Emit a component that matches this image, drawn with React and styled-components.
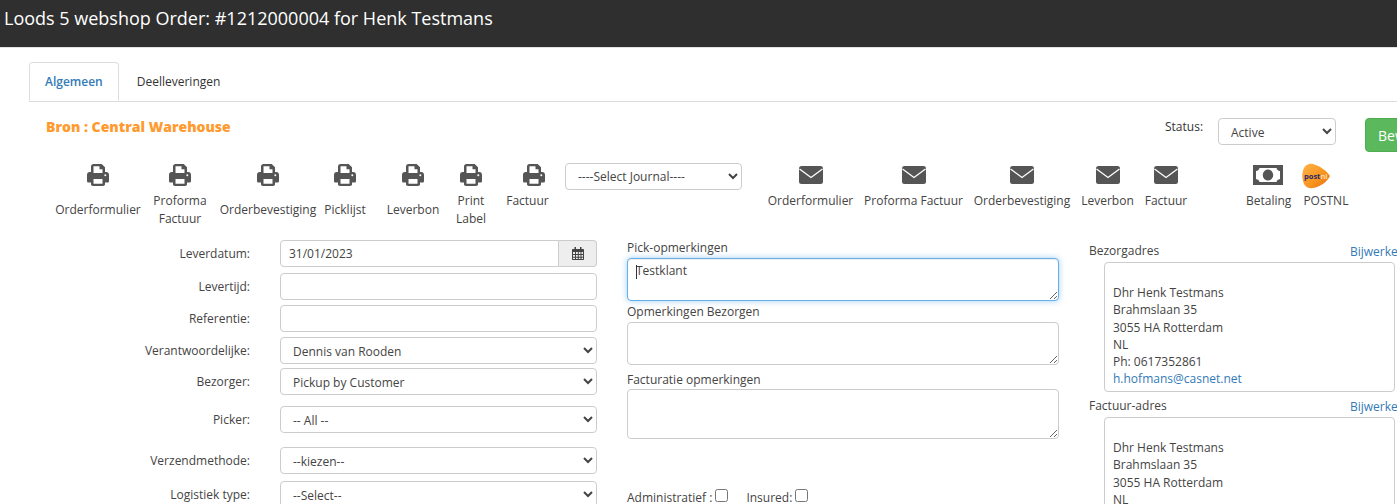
import React from 'react';
import styled, { createGlobalStyle } from 'styled-components';

const printLeft = [
  { lines: ['Orderformulier'], center: 84, iconShift: 0 },
  { lines: ['Proforma', 'Factuur'], center: 80, iconShift: 0 },
  { lines: ['Orderbevestiging'], center: 96, iconShift: 0 },
  { lines: ['Picklijst'], center: 58, iconShift: 0 },
  { lines: ['Leverbon'], center: 78, iconShift: 0 },
  { lines: ['Print', 'Label'], center: 38, iconShift: 0 },
  { lines: ['Factuur'], center: 75, iconShift: 6, top: true },
];

const mails = [
  { label: 'Orderformulier', width: 85 },
  { label: 'Proforma Factuur', width: 99 },
  { label: 'Orderbevestiging', width: 96 },
  { label: 'Leverbon', width: 53 },
  { label: 'Factuur', width: 42 },
];

const GlobalStyle = createGlobalStyle`
  html, body {
    margin: 0;
    padding: 0;
    height: 504px;
    overflow: hidden;
    background: #fff;
  }
  body {
    font-family: "Open Sans", "Noto Sans", sans-serif;
    font-size: 12px;
    color: #333;
  }
`;

const Page = styled.div`
  width: 1397px;
  height: 504px;
  overflow: hidden;
`;

const Header = styled.header`
  height: 48px;
  background: #2f2f2f;
  border-bottom: 1px solid #e3e3e3;
  padding: 5px 0 0 4px;
  box-sizing: border-box;
  color: #fff;
  font-size: 18px;
  line-height: 26px;
`;

const Content = styled.main`
  padding: 14px 0 0 29px;
  width: 1500px;
`;

const Tabs = styled.nav`
  display: flex;
  height: 39px;
  width: 1368px;
  border-bottom: 1px solid #ddd;
  box-sizing: content-box;
`;

const Tab = styled.div`
  height: ${p => (p.$active ? '39px' : '38px')};
  padding: 0 15px;
  line-height: 38px;
  font-size: 12px;
  box-sizing: border-box;
  color: ${p => (p.$active ? '#337ab7' : '#333')};
  font-weight: ${p => (p.$active ? 600 : 400)};
  background: #fff;
  border: 1px solid ${p => (p.$active ? '#ddd' : 'transparent')};
  border-bottom: ${p => (p.$active ? '1px solid #fff' : 'none')};
  border-radius: 4px 4px 0 0;
  margin-right: 2px;
`;

const SourceRow = styled.div`
  display: flex;
  height: 61px;
  padding-left: 17px;
`;

const Source = styled.div`
  color: #ff9a2e;
  font-weight: 800;
  font-size: 14px;
  line-height: 18px;
  padding-top: 16px;
  width: 1119px;
`;

const StatusLabel = styled.label`
  width: 53px;
  padding-top: 17px;
  line-height: 16px;
  font-size: 12px;
`;

const Select = styled.select`
  display: block;
  width: ${p => p.$width || '100%'};
  height: ${p => p.$height || '27px'};
  box-sizing: border-box;
  border: 1px solid #ccc;
  border-radius: 4px;
  background-color: #fff;
  color: #444;
  font-family: inherit;
  font-size: 12px;
  padding: 2px 0 0 8px;
`;

const StatusBox = styled.div`
  padding-top: 16px;
  margin-right: 29px;
`;

const SaveButton = styled.button`
  height: 34px;
  width: 100px;
  margin-top: 16px;
  text-align: left;
  border: 1px solid #4cae4c;
  border-radius: 4px;
  background: #5cb85c;
  color: #fff;
  font-family: inherit;
  font-size: 14px;
  padding: 0 0 0 12px;
`;

const Toolbar = styled.div`
  display: flex;
  align-items: flex-start;
  height: 77px;
`;

const PrintGroup = styled.div`
  display: flex;
  width: 509px;
  margin-left: 27px;
  flex: none;
`;

const ActionItem = styled.div`
  width: ${p => p.$width}px;
  display: flex;
  flex-direction: column;
  align-items: center;
  flex: none;
`;

const IconSlot = styled.div`
  height: ${p => 29 - (p.$drop || 0)}px;
  display: flex;
  align-items: flex-start;
  padding-top: ${p => p.$drop || 0}px;
  margin-left: ${p => (p.$shift || 0) * 2}px;
`;

const PrintLabel = styled.div`
  height: 36px;
  display: flex;
  flex-direction: column;
  justify-content: ${p => (p.$top ? 'flex-start' : 'center')};
  text-align: center;
  line-height: 18px;
  color: #444;
  white-space: nowrap;
`;

const JournalSelect = styled(Select)`
  margin-right: 26px;
  flex: none;
  padding-top: 0;
`;

const MailGroup = styled.div`
  display: flex;
  gap: 11px;
  flex: none;
  width: 478px;
`;

const PayItem = styled.div`
  display: flex;
  flex-direction: column;
  align-items: center;
  flex: none;
  margin-right: ${p => p.$gap}px;
`;

const SingleLabel = styled.div`
  line-height: 18px;
  color: #444;
  white-space: nowrap;
`;

const FormGrid = styled.div`
  display: grid;
  grid-template-columns: 568px 432px 300px;
  column-gap: 30px;
`;

const LeftColumn = styled.div`
  display: flex;
  flex-direction: column;
`;

const FieldRow = styled.div`
  display: grid;
  grid-template-columns: 221px 317px;
  column-gap: 30px;
  margin-top: ${p => p.$top || 0}px;
  align-items: center;
`;

const FieldLabel = styled.label`
  text-align: right;
  line-height: 16px;
  color: #444;
`;

const Input = styled.input`
  box-sizing: border-box;
  width: 100%;
  height: 27px;
  border: 1px solid #ccc;
  border-radius: 4px;
  padding: 0 8px;
  font-family: inherit;
  font-size: 12px;
  color: #444;
  display: block;
`;

const DateGroup = styled.div`
  display: flex;
  height: 27px;
`;

const DateInput = styled(Input)`
  flex: 1;
  border-radius: 4px 0 0 4px;
`;

const CalendarButton = styled.div`
  width: 38px;
  box-sizing: border-box;
  border: 1px solid #ccc;
  border-left: none;
  border-radius: 0 4px 4px 0;
  background: #eee;
  display: flex;
  align-items: center;
  justify-content: center;
`;

const MiddleColumn = styled.div`
  display: flex;
  flex-direction: column;
  width: 432px;
`;

const NoteLabel = styled.label`
  line-height: 16px;
  color: #444;
  height: 16px;
  margin-top: ${p => p.$top || 0}px;
`;

const NoteWrap = styled.div`
  position: relative;
`;

const Caret = styled.span`
  position: absolute;
  left: 9px;
  top: 9px;
  width: 1px;
  height: 14px;
  background: #333;
`;

const Note = styled.textarea`
  box-sizing: border-box;
  display: block;
  width: 100%;
  height: ${p => p.$height}px;
  margin-top: ${p => p.$gap ?? 2}px;
  padding: 3px 8px;
  border: 1px solid ${p => (p.$focus ? '#66afe9' : '#ccc')};
  border-radius: 4px;
  font-family: inherit;
  font-size: 12px;
  line-height: 17px;
  color: #444;
  box-shadow: ${p => (p.$focus ? '0 0 6px rgba(102,175,233,.6), inset 0 1px 1px rgba(0,0,0,.075)' : 'none')};
  outline: none;
`;

const CheckRow = styled.div`
  display: flex;
  align-items: center;
  margin-top: 50px;
  line-height: 16px;
  color: #444;
`;

const Check = styled.input.attrs({ type: 'checkbox' })`
  margin: 0 0 4px 3px;
  width: 13px;
  height: 13px;
`;

const CheckLabel = styled.label`
  margin-left: ${p => p.$left || 0}px;
`;

const AddressColumn = styled.div`
  display: flex;
  flex-direction: column;
  width: 306px;
`;

const AddressHead = styled.div`
  display: flex;
  justify-content: space-between;
  box-sizing: border-box;
  height: 22px;
  padding-top: 3px;
  line-height: 16px;
  color: #444;
  width: 330px;
`;

const UpdateLink = styled.a`
  color: #337ab7;
  margin-top: 1px;
  width: 69px;
`;

const AddressBox = styled.div`
  box-sizing: border-box;
  margin: 0 0 3px 15px;
  width: 291px;
  height: 130px;
  padding: 21px 8px 0;
  border: 1px solid #ccc;
  border-radius: 4px;
  line-height: 17.3px;
  color: #444;
`;

const MailLink = styled.a`
  color: #337ab7;
  display: block;
`;

const PrintIcon = () => (
  <svg width="24" height="24" viewBox="0 0 24 24" aria-hidden="true">
    <path
      fill="#555"
      fillRule="evenodd"
      d="M5 3.500C5 2.100 6.100 1 7.500 1h8.200L19 4.300V9h1.200C22 9 23 10.200 23 12v6c0 1-.7 1.600-1.600 1.600H19v2C19 22.500 18.100 23 17 23H7C5.900 23 5 22.500 5 21.600v-2H2.600C1.700 19.600 1 19 1 18v-6c0-1.800 1-3 2.800-3H5zM7.500 3.300V10h9V6.200h-3V3.300zM7.500 16v4.700h9V16zM19.300 11.200a1 1 0 1 0 0 2 1 1 0 0 0 0-2z"
    />
  </svg>
);

const MailIcon = () => (
  <svg width="24" height="18" viewBox="0 0 24 18" aria-hidden="true">
    <rect x="0" y="0" width="24" height="18" rx="2.500" fill="#555" />
    <path d="M0.500 3 12 11.500 23.500 3" fill="none" stroke="#fff" strokeWidth="1.300" />
  </svg>
);

const CalendarIcon = () => (
  <svg width="12" height="13" viewBox="0 0 12 13" aria-hidden="true">
    <path
      fill="#444"
      fillRule="evenodd"
      d="M2.500 0h1.500v2h4V0h1.500v2H11c.6 0 1 .4 1 1v9c0 .6-.4 1-1 1H1c-.6 0-1-.4-1-1V3c0-.6.4-1 1-1h1.500zM1 5v2h2V5zm3 0v2h1.800V5zm2.800 0v2H8.500V5zm2.700 0v2H11V5zM1 8v1.800h2V8zm3 0v1.800h1.800V8zm2.800 0v1.800H8.500V8zm2.700 0v1.800H11V8zM1 10.700V12h2v-1.300zm3 0V12h1.800v-1.300zm2.800 0V12H8.500v-1.300zm2.700 0V12H11v-1.300z"
    />
  </svg>
);

const MoneyIcon = () => (
  <svg width="30" height="20" viewBox="0 0 30 20" aria-hidden="true">
    <path
      fill="#555"
      fillRule="evenodd"
      d="M0 0h30v20H0zM6.500 3C6.200 4.600 5 5.800 3 6v8c2 .3 3.200 1.500 3.500 3h17c.3-1.500 1.500-2.700 3.500-3V6c-2-.2-3.200-1.400-3.500-3zM15 4.500c3 0 5.200 2.500 5.200 5.500s-2.200 5.500-5.200 5.500S9.800 13 9.800 10 12 4.500 15 4.500z"
    />
    <path fill="none" stroke="#555" strokeWidth="1.600" d="M13.300 7.800 15.300 6.500V13.500M13.300 13.500h4" />
  </svg>
);

const PostnlIcon = () => (
  <svg width="30" height="26" viewBox="0 0 30 26" aria-hidden="true">
    <defs>
      <linearGradient id="postnlFill" x1="0" y1="0" x2="1" y2="1">
        <stop offset="0" stopColor="#ffb347" />
        <stop offset="0.600" stopColor="#f7931e" />
        <stop offset="1" stopColor="#e8650f" />
      </linearGradient>
    </defs>
    <path d="M2 8C3 2 8 0 12 1c7 2 14 7 17 12-3 6-10 11-17 12C7 26 3 23 2 18 1 14 1 11 2 8z" fill="url(#postnlFill)" />
    <text x="3" y="15.500" fontFamily="Open Sans, sans-serif" fontSize="7.500" fontWeight="700">
      <tspan fill="#2a2a6a">post</tspan>
      <tspan fill="#ffd9a8">nl</tspan>
    </text>
  </svg>
);

export default function App() {
  return (
    <Page>
      <GlobalStyle />
      <Header>Loods 5 webshop Order: #1212000004 for Henk Testmans</Header>
      <Content>
        <Tabs>
          <Tab $active>Algemeen</Tab>
          <Tab>Deelleveringen</Tab>
        </Tabs>
        <SourceRow>
          <Source>Bron : Central Warehouse</Source>
          <StatusLabel>Status:</StatusLabel>
          <StatusBox>
            <Select $width="118px" defaultValue="Active">
              <option>Active</option>
            </Select>
          </StatusBox>
          <SaveButton>Bewaren</SaveButton>
        </SourceRow>
        <Toolbar>
          <PrintGroup>
            {printLeft.map(item => (
              <ActionItem key={item.lines.join()} $width={item.center}>
                <IconSlot $shift={item.iconShift}><PrintIcon /></IconSlot>
                <PrintLabel $top={item.top}>
                  {item.lines.map(line => <span key={line}>{line}</span>)}
                </PrintLabel>
              </ActionItem>
            ))}
          </PrintGroup>
          <JournalSelect $width="177px" defaultValue="j">
            <option value="j">----Select Journal----</option>
          </JournalSelect>
          <MailGroup>
            {mails.map(m => (
              <ActionItem key={m.label} $width={m.width}>
                <IconSlot $drop={3}><MailIcon /></IconSlot>
                <SingleLabel>{m.label}</SingleLabel>
              </ActionItem>
            ))}
          </MailGroup>
          <PayItem $gap={12}>
            <IconSlot $drop={2} $shift={-1}><MoneyIcon /></IconSlot>
            <SingleLabel>Betaling</SingleLabel>
          </PayItem>
          <PayItem $gap={0}>
            <IconSlot $shift={-10}><PostnlIcon /></IconSlot>
            <SingleLabel>POSTNL</SingleLabel>
          </PayItem>
        </Toolbar>
        <FormGrid>
          <LeftColumn>
            <FieldRow>
              <FieldLabel>Leverdatum:</FieldLabel>
              <DateGroup>
                <DateInput defaultValue="31/01/2023" />
                <CalendarButton><CalendarIcon /></CalendarButton>
              </DateGroup>
            </FieldRow>
            <FieldRow $top={6}>
              <FieldLabel>Levertijd:</FieldLabel>
              <Input />
            </FieldRow>
            <FieldRow $top={5}>
              <FieldLabel>Referentie:</FieldLabel>
              <Input />
            </FieldRow>
            <FieldRow $top={5}>
              <FieldLabel>Verantwoordelijke:</FieldLabel>
              <Select defaultValue="d"><option value="d">Dennis van Rooden</option></Select>
            </FieldRow>
            <FieldRow $top={4}>
              <FieldLabel>Bezorger:</FieldLabel>
              <Select defaultValue="p"><option value="p">Pickup by Customer</option></Select>
            </FieldRow>
            <FieldRow $top={11}>
              <FieldLabel>Picker:</FieldLabel>
              <Select defaultValue="a"><option value="a">-- All --</option></Select>
            </FieldRow>
            <FieldRow $top={14}>
              <FieldLabel>Verzendmethode:</FieldLabel>
              <Select defaultValue="k"><option value="k">--kiezen--</option></Select>
            </FieldRow>
            <FieldRow $top={7}>
              <FieldLabel>Logistiek type:</FieldLabel>
              <Select defaultValue="s"><option value="s">--Select--</option></Select>
            </FieldRow>
          </LeftColumn>
          <MiddleColumn>
            <NoteLabel>Pick-opmerkingen</NoteLabel>
            <NoteWrap>
              <Note $focus $height={43} defaultValue="Testklant" />
              <Caret />
            </NoteWrap>
            <NoteLabel $top={3}>Opmerkingen Bezorgen</NoteLabel>
            <Note $height={43} />
            <NoteLabel $top={7}>Facturatie opmerkingen</NoteLabel>
            <Note $gap={1} $height={50} />
            <CheckRow>
              <label>Administratief :</label>
              <Check />
              <CheckLabel $left={18}>Insured:</CheckLabel>
              <Check />
            </CheckRow>
          </MiddleColumn>
          <AddressColumn>
            <AddressHead>
              <span>Bezorgadres</span>
              <UpdateLink>Bijwerken</UpdateLink>
            </AddressHead>
            <AddressBox>
              Dhr Henk Testmans<br />
              Brahmslaan 35<br />
              3055 HA Rotterdam<br />
              NL<br />
              Ph: 0617352861
              <MailLink>h.hofmans@casnet.net</MailLink>
            </AddressBox>
            <AddressHead>
              <span>Factuur-adres</span>
              <UpdateLink>Bijwerken</UpdateLink>
            </AddressHead>
            <AddressBox>
              Dhr Henk Testmans<br />
              Brahmslaan 35<br />
              3055 HA Rotterdam<br />
              NL
            </AddressBox>
          </AddressColumn>
        </FormGrid>
      </Content>
    </Page>
  );
}
